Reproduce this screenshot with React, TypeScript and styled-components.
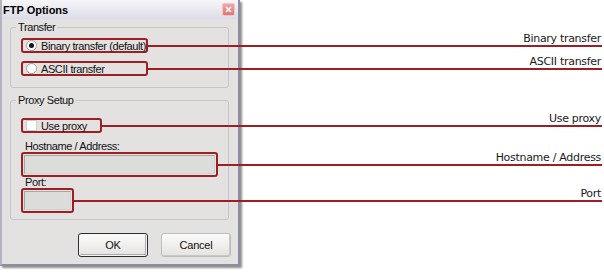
import styled, { createGlobalStyle } from "styled-components";

const GlobalStyle = createGlobalStyle`
  * { box-sizing: border-box; }
  html, body { margin: 0; padding: 0; background: #fff; }
  body { font-family: "Liberation Sans", Arial, sans-serif; }
`;

const PAGE_RIGHT = 604;
const BOX_LEFT = 21;

const Page = styled.div`
  position: relative;
  width: 604px;
  height: 274px;
  overflow: hidden;
  background: #fff;
`;

const Dialog = styled.div`
  width: 240px;
  height: 266px;
  display: flex;
  flex-direction: column;
  background: #e3e2e0;
  border-left: 2px solid #b3b3c7;
  border-right: 2px solid #8d8da2;
  border-bottom: 2px solid #8d8da2;
  box-shadow: 2px 2px 2px rgba(0, 0, 0, 0.45);
  color: #111;
  font-size: 11px;
  letter-spacing: -0.4px;
`;

const TitleBar = styled.div`
  height: 19px;
  display: flex;
  align-items: center;
  justify-content: space-between;
  padding: 0 3px 0 1px;
  background: linear-gradient(#f6f6f9, #dcdce7);
`;

const Title = styled.span`
  font-weight: bold;
  font-size: 11px;
  letter-spacing: 0;
  color: #000;
`;

const CloseButton = styled.span`
  width: 13px;
  height: 13px;
  display: flex;
  align-items: center;
  justify-content: center;
  border: 1px solid #f3c3c3;
  border-radius: 2px;
  background: linear-gradient(#f2a6a6, #e27474);
`;

const Body = styled.div`
  display: flex;
  flex-direction: column;
  padding: 2px 9px 0 8px;
`;

const GroupBox = styled.fieldset<{ $top?: number }>`
  margin: ${(p) => p.$top ?? 0}px 0 0 0;
  padding: 0;
  min-width: 0;
  border: 1px solid #c6c5c7;
  border-radius: 3px;
`;

const Legend = styled.legend`
  margin-left: 5px;
  padding: 0 2px;
  line-height: 13px;
  font-size: 11px;
`;

const GroupContent = styled.div<{ $pad: string; $gap?: number }>`
  display: flex;
  flex-direction: column;
  align-items: flex-start;
  gap: ${(p) => p.$gap ?? 0}px;
  padding: ${(p) => p.$pad};
`;

const Highlight = styled.div<{ $w: number; $h: number; $top?: number }>`
  position: relative;
  width: ${(p) => p.$w}px;
  height: ${(p) => p.$h}px;
  margin-top: ${(p) => p.$top ?? 0}px;
  display: flex;
  align-items: center;
  gap: 4px;
  padding: 0 0 0 3px;
  border: 2px solid #9c1f25;
  border-radius: 3px;
`;

const FieldHighlight = styled(Highlight)`
  padding: 1px;
`;

const Callout = styled.div<{ $reach: number }>`
  position: absolute;
  left: 100%;
  top: calc(50% - 1px);
  width: ${(p) => p.$reach}px;
  height: 2px;
  background: #9c1f25;
`;

const CalloutLabel = styled.span`
  position: absolute;
  right: 1px;
  bottom: 2px;
  white-space: nowrap;
  font-family: "DejaVu Sans", Verdana, sans-serif;
  font-size: 11px;
  line-height: 13px;
  letter-spacing: -0.3px;
  color: #1a1a1a;
`;

const Radio = styled.span<{ $checked?: boolean }>`
  width: 11px;
  height: 11px;
  flex: none;
  display: flex;
  align-items: center;
  justify-content: center;
  border-radius: 50%;
  border: 1px solid #a4a4a4;
  background: radial-gradient(circle at 65% 65%, #fff 55%, #e6e6e6);

  &::after {
    content: "";
    display: ${(p) => (p.$checked ? "block" : "none")};
    width: 5px;
    height: 5px;
    border-radius: 50%;
    background: #111;
  }
`;

const Checkbox = styled.span`
  width: 11px;
  height: 11px;
  flex: none;
  border: 1px solid #cfcfcf;
  background: #fff;
`;

const FieldLabel = styled.div<{ $lh: number; $top?: number }>`
  line-height: ${(p) => p.$lh}px;
  margin-top: ${(p) => p.$top ?? 0}px;
  padding-left: 4px;
`;

const TextInput = styled.div`
  width: 100%;
  height: 100%;
  background: #dcdcda;
  border: 1px solid #a3a8a3;
  border-right-color: #d2d4d2;
  border-bottom-color: #d2d4d2;
`;

const ButtonRow = styled.div`
  display: flex;
  justify-content: flex-end;
  gap: 13px;
  margin: 13px -2px 0 0;
`;

const Button = styled.button<{ $default?: boolean }>`
  width: 70px;
  height: 24px;
  padding: 0;
  font: inherit;
  letter-spacing: -0.2px;
  color: #111;
  border-radius: 3px;
  border: 1px solid ${(p) => (p.$default ? "#2f2f2f" : "#bdbdbd")};
  background: linear-gradient(#fbfbfb, #e4e3df);
  box-shadow: ${(p) =>
    p.$default ? "inset 0 0 0 1px #f4f4f4, inset -1px -1px 0 1px #a9a9b3" : "inset -1px -1px 0 #c9c9c9"};
`;

function Annotated({
  w,
  h,
  top,
  label,
  field,
  children,
}: {
  w: number;
  h: number;
  top?: number;
  label: string;
  field?: boolean;
  children: React.ReactNode;
}) {
  const Box = field ? FieldHighlight : Highlight;
  return (
    <Box $w={w} $h={h} $top={top}>
      {children}
      <Callout $reach={PAGE_RIGHT - BOX_LEFT - w}>
        <CalloutLabel>{label}</CalloutLabel>
      </Callout>
    </Box>
  );
}

export default function App() {
  return (
    <Page>
      <GlobalStyle />
      <Dialog>
        <TitleBar>
          <Title>FTP Options</Title>
          <CloseButton>
            <svg width="7" height="7" viewBox="0 0 7 7">
              <path d="M1 1L6 6M6 1L1 6" stroke="#fff" strokeWidth="1.6" />
            </svg>
          </CloseButton>
        </TitleBar>
        <Body>
          <GroupBox>
            <Legend>Transfer</Legend>
            <GroupContent $pad="4px 0 11px 10px" $gap={8}>
              <Annotated w={127} h={15} label="Binary transfer">
                <Radio $checked />
                Binary transfer (default)
              </Annotated>
              <Annotated w={127} h={15} label="ASCII transfer">
                <Radio />
                ASCII transfer
              </Annotated>
            </GroupContent>
          </GroupBox>
          <GroupBox $top={6}>
            <Legend>Proxy Setup</Legend>
            <GroupContent $pad="11px 0 6px 10px">
              <Annotated w={81} h={15} label="Use proxy">
                <Checkbox />
                Use proxy
              </Annotated>
              <FieldLabel $lh={12} $top={7}>Hostname / Address:</FieldLabel>
              <Annotated w={197} h={25} label="Hostname / Address" field>
                <TextInput />
              </Annotated>
              <FieldLabel $lh={11}>Port:</FieldLabel>
              <Annotated w={53} h={25} label="Port" field>
                <TextInput />
              </Annotated>
            </GroupContent>
          </GroupBox>
          <ButtonRow>
            <Button $default>OK</Button>
            <Button>Cancel</Button>
          </ButtonRow>
        </Body>
      </Dialog>
    </Page>
  );
}
